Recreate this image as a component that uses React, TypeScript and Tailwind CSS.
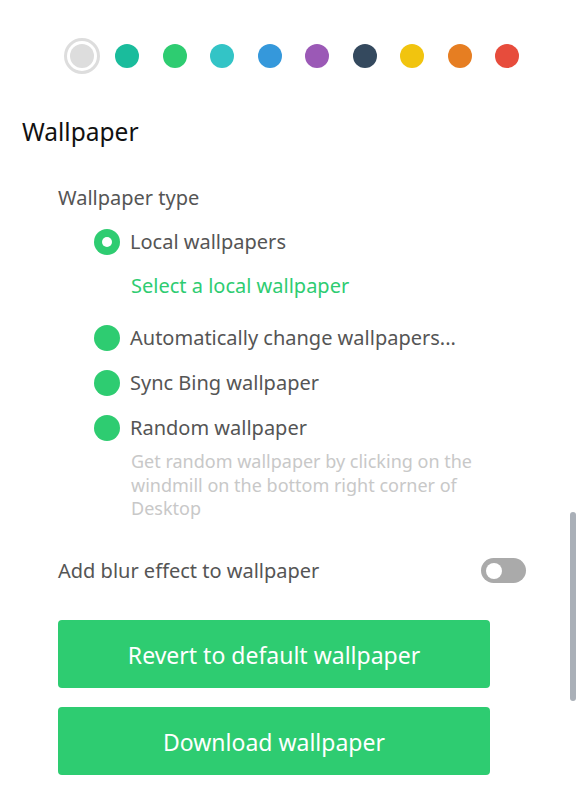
const colors = [
  "#1abc9c",
  "#2ecc71",
  "#33c4c6",
  "#3598db",
  "#9b59b6",
  "#34495e",
  "#f1c40f",
  "#e67e22",
  "#e74c3c",
];

const options = [
  { label: "Local wallpapers", checked: true },
  { label: "Automatically change wallpapers...", checked: false },
  { label: "Sync Bing wallpaper", checked: false },
  { label: "Random wallpaper", checked: false },
];

function Radio({ checked }: { checked: boolean }) {
  return (
    <span className="flex h-[26px] w-[26px] shrink-0 items-center justify-center rounded-full bg-[#2ecc71]">
      {checked && <span className="h-[10px] w-[10px] rounded-full bg-white" />}
    </span>
  );
}

export default function App() {
  return (
    <div
      className="relative h-[795px] w-[577px] overflow-hidden bg-white"
      style={{ fontFamily: '"Noto Sans", "Open Sans", sans-serif' }}
    >
      {/* theme colours */}
      <div className="flex items-center pl-[64px] pt-[38px]">
        <span className="flex h-[36px] w-[36px] items-center justify-center rounded-full border-[3px] border-[#dddddd]">
          <span className="h-[24px] w-[24px] rounded-full bg-[#dddddd]" />
        </span>
        <div className="ml-[15px] flex gap-[23.5px]">
          {colors.map((c) => (
            <span key={c} className="h-[24px] w-[24px] rounded-full" style={{ backgroundColor: c }} />
          ))}
        </div>
      </div>

      <h2 className="ml-[22px] mt-[42px] text-[24.5px] leading-[32px] text-[#111]">Wallpaper</h2>

      <div className="pl-[58px] pr-[51px]">
        <div className="mt-[36px] text-[20px] leading-[28px] text-[#555]">Wallpaper type</div>

        <div className="mt-[16px] flex flex-col pl-[36px]">
          <div className="flex h-[28px] items-center gap-[10px]">
            <Radio checked />
            <span className="text-[20px] text-[#555]">{options[0].label}</span>
          </div>
          <div className="ml-[37px] mt-[16px] text-[20px] leading-[28px] text-[#2ecc71]">
            Select a local wallpaper
          </div>
          {options.slice(1).map((o, i) => (
            <div key={o.label} className={`flex h-[28px] items-center gap-[10px] ${i === 0 ? "mt-[24px]" : "mt-[17px]"}`}>
              <Radio checked={o.checked} />
              <span className="text-[20px] text-[#555]">{o.label}</span>
            </div>
          ))}
          <p className="ml-[37px] mt-[8px] text-[18px] leading-[23.5px] text-[#c8c8c8]">
            Get random wallpaper by clicking on the windmill on the bottom right corner of Desktop
          </p>
        </div>

        <div className="mt-[36px] flex items-center justify-between">
          <span className="text-[20px] leading-[28px] text-[#555]">Add blur effect to wallpaper</span>
          <span className="flex h-[25px] w-[45px] items-center rounded-full bg-[#aaaaaa] px-[5px]">
            <span className="h-[16px] w-[16px] rounded-full bg-white" />
          </span>
        </div>

        <div className="mt-[35px] flex w-[432px] flex-col gap-[19px]">
          <button className="h-[68px] rounded-[4px] bg-[#2ecc71] pt-[4px] text-[23px] text-white">
            Revert to default wallpaper
          </button>
          <button className="h-[68px] rounded-[4px] bg-[#2ecc71] pt-[4px] text-[23px] text-white">
            Download wallpaper
          </button>
        </div>
      </div>

      {/* scrollbar thumb */}
      <div className="absolute right-[1px] top-[512px] h-[189px] w-[6px] rounded-full bg-[#aab0b8]" />
    </div>
  );
}
